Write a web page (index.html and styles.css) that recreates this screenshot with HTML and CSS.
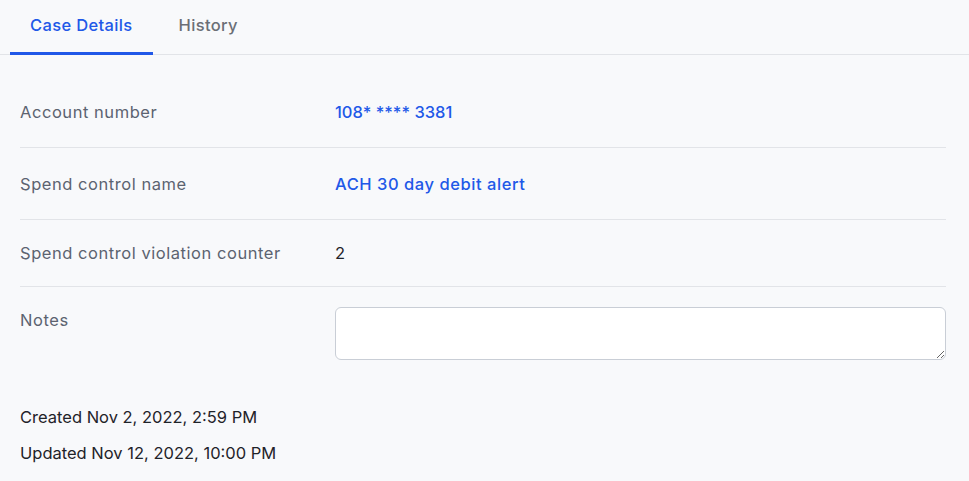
FILE: index.html
```html
<!DOCTYPE html>
<html lang="en">
<head>
  <meta charset="UTF-8" />
  <title>Case Details</title>
  <link rel="stylesheet" href="styles.css">
</head>
<body>
  <div class="tabs">
    <a class="tab active" href="#">Case Details</a>
    <a class="tab" href="#">History</a>
  </div>

  <div class="details">
    <div class="row">
      <div class="label">Account number</div>
      <a class="value link num" href="#">108* **** 3381</a>
    </div>
    <div class="row">
      <div class="label">Spend control name</div>
      <a class="value link" href="#">ACH 30 day debit alert</a>
    </div>
    <div class="row short">
      <div class="label">Spend control violation counter</div>
      <div class="value">2</div>
    </div>
    <div class="row notes">
      <label class="label" for="notes">Notes</label>
      <textarea id="notes" class="notes-box"></textarea>
    </div>

    <div class="meta">
      <p>Created Nov 2, 2022, 2:59 PM</p>
      <p>Updated Nov 12, 2022, 10:00 PM</p>
    </div>
  </div>
</body>
</html>
```

FILE: styles.css
```css
* {
  box-sizing: border-box;
  font-family: Inter, 'Noto Sans', sans-serif;
}

html, body {
  margin: 0;
  padding: 0;
}

body {
  background: #f8f9fb;
  color: #1f2329;
  font-size: 16.5px;
  letter-spacing: 0.55px;
  min-height: 100vh;
}

a {
  text-decoration: none;
}

/* tabs */
.tabs {
  display: flex;
  gap: 6px;
  padding-left: 10px;
  height: 55px;
  border-bottom: 1px solid #e2e4e8;
}

.tab {
  display: flex;
  align-items: center;
  height: 55px;
  padding: 0 20px 3px;
  margin-bottom: -1px;
  color: #6b6f76;
  font-weight: 500;
  letter-spacing: 0.35px;
  border-bottom: 3px solid transparent;
}

.tab.active {
  color: #2158e8;
  border-bottom-color: #2158e8;
}

/* detail rows */
.details {
  padding: 21px 23px 0 20px;
}

.row {
  display: flex;
  align-items: center;
  height: 72px;
  border-bottom: 1px solid #e2e4e8;
}

.row.short {
  height: 67px;
}

.label {
  width: 315px;
  flex-shrink: 0;
  color: #5c6370;
}

.value {
  color: #1f2329;
}

.link {
  color: #2158e8;
  font-weight: 500;
}

.num {
  letter-spacing: 0;
}

.row.notes {
  align-items: flex-start;
  height: auto;
  padding-top: 20px;
  border-bottom: none;
}

.row.notes .label {
  padding-top: 3px;
}

.notes-box {
  flex: 1;
  height: 53px;
  border: 1px solid #c9ced6;
  border-radius: 6px;
  background: #fff;
  font-size: 15px;
  padding: 8px 10px;
}

.meta {
  padding-top: 39px;
}

.meta p {
  margin: 0;
  line-height: 36px;
  letter-spacing: 0;
  color: #1f2329;
}
```
